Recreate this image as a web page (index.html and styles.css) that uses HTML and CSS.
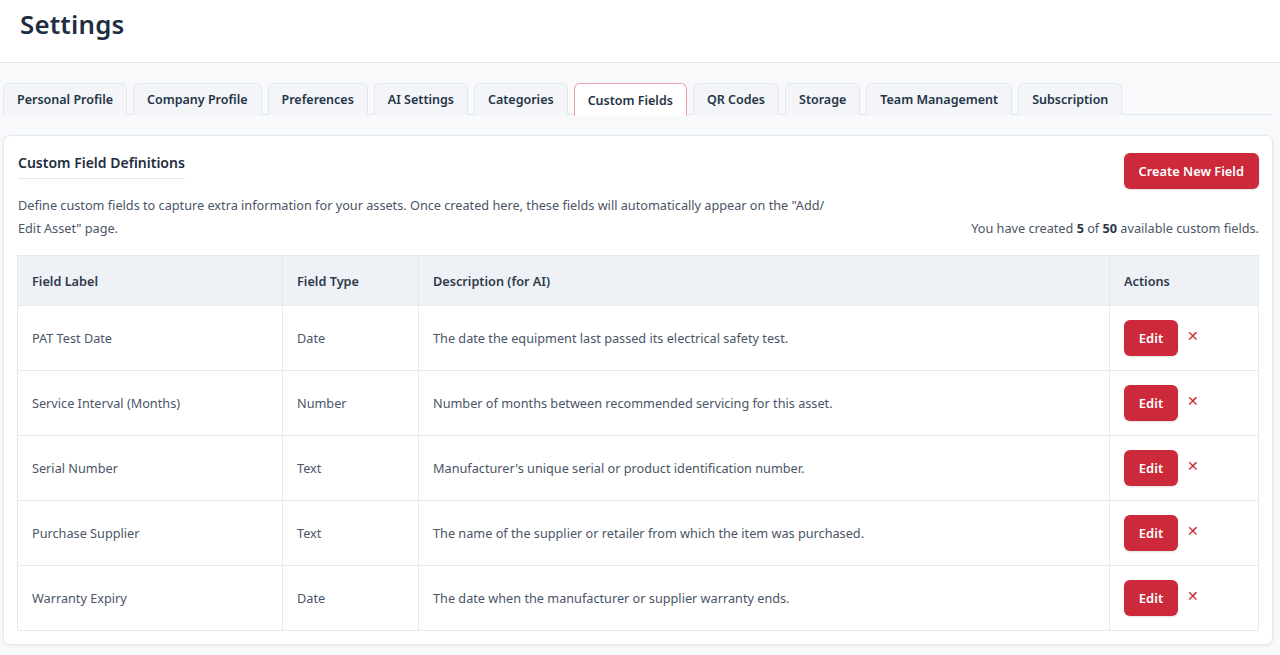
FILE: index.html
```html
<!DOCTYPE html>
<html lang="en">
<head>
  <meta charset="UTF-8" />
  <meta name="viewport" content="width=device-width, initial-scale=1.0"/>
  <title>Settings - Custom Fields</title>
  <link rel="stylesheet" href="styles.css">
</head>
<body>

  <header class="page-header">
    <h1>Settings</h1>
  </header>

  <main class="page">
    <nav class="tabs">
      <a class="tab">Personal Profile</a>
      <a class="tab">Company Profile</a>
      <a class="tab">Preferences</a>
      <a class="tab">AI Settings</a>
      <a class="tab">Categories</a>
      <a class="tab active">Custom Fields</a>
      <a class="tab">QR Codes</a>
      <a class="tab">Storage</a>
      <a class="tab">Team Management</a>
      <a class="tab">Subscription</a>
    </nav>

    <section class="card">
      <div class="card-head">
        <h2 class="card-title">Custom Field Definitions</h2>
        <button class="btn btn-primary btn-create">Create New Field</button>
      </div>

      <div class="intro">
        <p class="intro-text">Define custom fields to capture extra information for your assets. Once created here, these fields will automatically appear on the "Add/ Edit Asset" page.</p>
        <p class="usage">You have created <b>5</b> of <b>50</b> available custom fields.</p>
      </div>

      <table class="fields">
        <thead>
          <tr>
            <th class="col-label">Field Label</th>
            <th class="col-type">Field Type</th>
            <th class="col-desc">Description (for AI)</th>
            <th class="col-actions">Actions</th>
          </tr>
        </thead>
        <tbody>
          <tr>
            <td>PAT Test Date</td>
            <td>Date</td>
            <td>The date the equipment last passed its electrical safety test.</td>
            <td><div class="actions"><button class="btn btn-primary btn-edit">Edit</button><button class="btn-delete">&#x2715;</button></div></td>
          </tr>
          <tr>
            <td>Service Interval (Months)</td>
            <td>Number</td>
            <td>Number of months between recommended servicing for this asset.</td>
            <td><div class="actions"><button class="btn btn-primary btn-edit">Edit</button><button class="btn-delete">&#x2715;</button></div></td>
          </tr>
          <tr>
            <td>Serial Number</td>
            <td>Text</td>
            <td>Manufacturer's unique serial or product identification number.</td>
            <td><div class="actions"><button class="btn btn-primary btn-edit">Edit</button><button class="btn-delete">&#x2715;</button></div></td>
          </tr>
          <tr>
            <td>Purchase Supplier</td>
            <td>Text</td>
            <td>The name of the supplier or retailer from which the item was purchased.</td>
            <td><div class="actions"><button class="btn btn-primary btn-edit">Edit</button><button class="btn-delete">&#x2715;</button></div></td>
          </tr>
          <tr>
            <td>Warranty Expiry</td>
            <td>Date</td>
            <td>The date when the manufacturer or supplier warranty ends.</td>
            <td><div class="actions"><button class="btn btn-primary btn-edit">Edit</button><button class="btn-delete">&#x2715;</button></div></td>
          </tr>
        </tbody>
      </table>
    </section>
  </main>

</body>
</html>
```

FILE: styles.css
```css
:root {
  --bg-color: #f8f9fb;
  --border-color: #e3e7ee;
  --text-color: #1f2d3d;
  --muted-color: #4a5568;
  --primary-color: #cc2a3a;
}

* {
  margin: 0;
  padding: 0;
  box-sizing: border-box;
}

body {
  font-family: 'Noto Sans', 'Open Sans', sans-serif;
  background: var(--bg-color);
  color: var(--text-color);
  height: 655px;
  overflow: hidden;
}

.page-header {
  background: #ffffff;
  height: 63px;
  border-bottom: 1px solid var(--border-color);
  padding: 6px 20px 0;
}

.page-header h1 {
  font-size: 25.8px;
  font-weight: 600;
  color: #1e2d3f;
  letter-spacing: 0.2px;
}

.page {
  padding: 20px 7px 0 3px;
}

.tabs {
  display: flex;
  gap: 6px;
  border-bottom: 1px solid var(--border-color);
  height: 32px;
}

.tab {
  display: flex;
  align-items: center;
  height: 32px;
  padding: 0 13px;
  font-size: 12.5px;
  font-weight: 600;
  color: #243447;
  background: #f3f5f8;
  border: 1px solid var(--border-color);
  border-bottom: none;
  border-radius: 6px 6px 0 0;
  cursor: pointer;
}

.tab.active {
  background: #ffffff;
  border-color: #ec9fa6;
  height: 33px;
}

.card {
  margin-top: 20px;
  background: #ffffff;
  border: 1px solid var(--border-color);
  border-radius: 7px;
  box-shadow: 0 1px 4px rgba(15, 23, 42, 0.05);
  padding: 15px 13px 13px;
  height: 510px;
}

.card-head {
  display: flex;
  justify-content: space-between;
  align-items: flex-start;
}

.card-title {
  font-size: 14px;
  font-weight: 600;
  color: #1e2d3f;
  padding-bottom: 6px;
  border-bottom: 1px solid var(--border-color);
  margin: 2px 0 0 1px;
}

.btn {
  border: none;
  cursor: pointer;
  font-family: inherit;
}

.btn-primary {
  background: var(--primary-color);
  color: #ffffff;
  font-weight: 600;
  border-radius: 6px;
  box-shadow: 0 1px 2px rgba(0, 0, 0, 0.12);
}

.btn-create {
  font-size: 12.8px;
  height: 36px;
  padding: 0 15px;
  margin-top: 2px;
}

.intro {
  display: flex;
  justify-content: space-between;
  align-items: flex-end;
  margin-top: 5px;
  margin-bottom: 15px;
  font-size: 12.7px;
  line-height: 23px;
  color: var(--muted-color);
}

.intro-text {
  max-width: 825px;
  padding-left: 1px;
}

.usage {
  text-align: right;
}

.usage b {
  color: #2d3748;
}

.fields {
  width: 100%;
  border-collapse: collapse;
  font-size: 12.7px;
  color: var(--muted-color);
}

.fields th,
.fields td {
  border: 1px solid #e6e9ef;
  text-align: left;
  padding: 0 14px;
}

.fields th {
  background: #eef2f7;
  height: 50px;
  font-weight: 600;
  color: #2d3a4a;
}

.fields td {
  height: 65px;
}

.col-label { width: 265px; }
.col-type { width: 136px; }
.col-actions { width: 149px; }

.actions {
  display: flex;
  align-items: center;
  gap: 5px;
}

.btn-edit {
  font-size: 13px;
  width: 54px;
  height: 36px;
}

.btn-delete {
  background: none;
  border: none;
  color: var(--primary-color);
  font-size: 14px;
  cursor: pointer;
  padding: 0 4px;
  margin-top: -4px;
}
```
